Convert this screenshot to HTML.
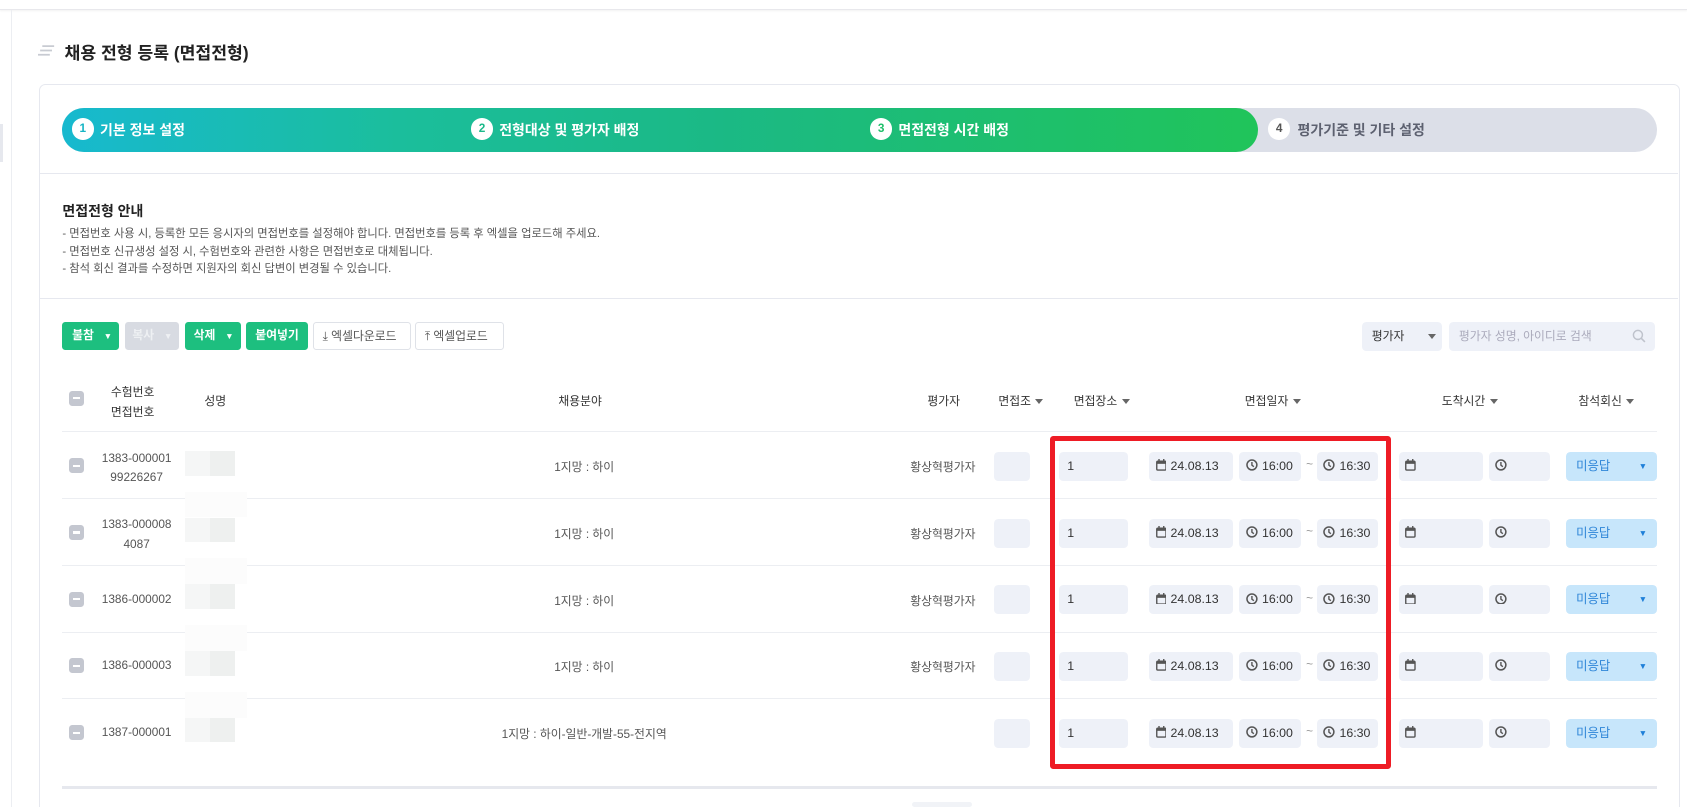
<!DOCTYPE html>
<html><head><meta charset="utf-8">
<style>
html,body{margin:0;padding:0;background:#fff;overflow:hidden;width:1687px;height:807px}
#w{position:absolute;left:0;top:0;width:1568px;height:750px;overflow:hidden;zoom:1.07589;font-family:"Liberation Sans","Noto Sans CJK KR",sans-serif;color:#222}
.a{position:absolute}
.t{position:absolute;white-space:nowrap}
.inp{position:absolute;background:#eef1f8;border-radius:4px;height:27px;font-size:11.5px;color:#333;line-height:27px}
.btn{position:absolute;top:299px;height:26px;border-radius:3px;font-size:11px;font-weight:bold;color:#fff;line-height:26px;box-sizing:border-box}
.g{background:#1dbf7f}
.o{background:#fff;border:1px solid #dfe2e8;color:#555;font-weight:normal}
.cb{position:absolute;width:14px;height:14px;border-radius:3px;background:#c4c7d0}
.cb:after{content:"";position:absolute;left:4px;top:6px;width:6px;height:2px;background:#fff}
.hd{position:absolute;font-size:11px;color:#333;white-space:nowrap}
.tri{display:inline-block;width:0;height:0;border-left:4px solid transparent;border-right:4px solid transparent;border-top:5px solid #666;margin-left:4px;vertical-align:middle}
.cell{position:absolute;font-size:11px;color:#555;white-space:nowrap}
.step{position:absolute;top:110px;width:20px;height:20px;border-radius:50%;background:#fff;font-size:11px;font-weight:bold;text-align:center;line-height:20px}
.sl{position:absolute;top:112px;font-size:13px;font-weight:bold;color:#fff;line-height:20px;white-space:nowrap}
</style></head><body><div id="w">
<div class="a" style="left:0;top:0;width:1568px;height:8px;background:#fff;border-bottom:1px solid #e8e8ec;box-shadow:0 1px 2px #eee"></div>
<div class="a" style="left:10px;top:9px;width:1px;height:741px;background:#eceef2"></div>
<div class="a" style="left:0;top:115px;width:3px;height:36px;background:#e6e8ee"></div>
<svg class="a" style="left:35px;top:41px" width="16" height="12"><path d="M4 2h11M2 6h11M0 10h11" stroke="#c8cbd2" stroke-width="1.6"/></svg>
<div class="t" style="left:60px;top:36px;font-size:16px;font-weight:bold;color:#222">채용 전형 등록 (면접전형)</div>
<div class="a" style="left:36px;top:78px;width:1524px;height:700px;border:1px solid #e6e8ef;border-radius:6px"></div>
<div class="a" style="left:58px;top:100px;width:1482px;height:41px;border-radius:21px;background:#dcdfe8"></div>
<div class="a" style="left:58px;top:100px;width:1111px;height:41px;border-radius:21px;background:linear-gradient(90deg,#17b9cf 0%,#1bbe9c 28%,#1bb985 55%,#20c45a 100%)"></div>
<div class="step" style="left:67px;color:#16b5c5">1</div><div class="sl" style="left:93px">기본 정보 설정</div>
<div class="step" style="left:438px;color:#1bb98a">2</div><div class="sl" style="left:464px">전형대상 및 평가자 배정</div>
<div class="step" style="left:809px;color:#1fbf6a">3</div><div class="sl" style="left:835px">면접전형 시간 배정</div>
<div class="step" style="left:1179px;color:#555">4</div><div class="sl" style="left:1206px;color:#5d6170">평가기준 및 기타 설정</div>
<div class="a" style="left:37px;top:161px;width:1523px;height:1px;background:#e6e8ef"></div>
<div class="t" style="left:58px;top:187px;font-size:13px;font-weight:bold">면접전형 안내</div>
<div class="t" style="left:58px;top:209px;font-size:10.5px;color:#555">- 면접번호 사용 시, 등록한 모든 응시자의 면접번호를 설정해야 합니다. 면접번호를 등록 후 엑셀을 업로드해 주세요.</div>
<div class="t" style="left:58px;top:226px;font-size:10.5px;color:#555">- 면접번호 신규생성 설정 시, 수험번호와 관련한 사항은 면접번호로 대체됩니다.</div>
<div class="t" style="left:58px;top:242px;font-size:10.5px;color:#555">- 참석 회신 결과를 수정하면 지원자의 회신 답변이 변경될 수 있습니다.</div>
<div class="a" style="left:37px;top:277px;width:1523px;height:1px;background:#e6e8ef"></div>
<div class="btn g" style="left:58px;width:53px;padding-left:9px">불참 <span style="margin-left:6px;font-size:8px">▼</span></div>
<div class="btn" style="left:116px;width:50px;padding-left:7px;background:#d8dbe2;color:#eef0f3">복사 <span style="margin-left:6px;font-size:8px">▼</span></div>
<div class="btn g" style="left:172px;width:52px;padding-left:8px">삭제 <span style="margin-left:6px;font-size:8px">▼</span></div>
<div class="btn g" style="left:229px;width:57px;text-align:center">붙여넣기</div>
<div class="btn o" style="left:291px;width:91px;padding-left:8px">⤓ 엑셀다운로드</div>
<div class="btn o" style="left:386px;width:82px;padding-left:8px">⤒ 엑셀업로드</div>
<div class="inp" style="left:1266px;top:299px;width:74px;font-size:11px;padding-left:9px;box-sizing:border-box">평가자<span class="tri" style="margin-left:22px"></span></div>
<div class="inp" style="left:1347px;top:299px;width:191px;font-size:11px;padding-left:9px;box-sizing:border-box;color:#aab">평가자 성명, 아이디로 검색
<svg style="position:absolute;right:8px;top:7px" width="13" height="13"><circle cx="5.5" cy="5.5" r="4.2" stroke="#bfc3cc" stroke-width="1.4" fill="none"/><path d="M8.5 8.5L12 12" stroke="#bfc3cc" stroke-width="1.5"/></svg></div>
<div class="cb" style="left:64px;top:363px"></div>
<div class="hd" style="left:103px;top:355px;text-align:center;line-height:19px">수험번호<br>면접번호</div>
<div class="hd" style="left:190px;top:364px">성명</div>
<div class="hd" style="left:519px;top:364px">채용분야</div>
<div class="hd" style="left:862px;top:364px">평가자</div>
<div class="hd" style="left:928px;top:364px">면접조<span class="tri"></span></div>
<div class="hd" style="left:998px;top:364px">면접장소<span class="tri"></span></div>
<div class="hd" style="left:1157px;top:364px">면접일자<span class="tri"></span></div>
<div class="hd" style="left:1340px;top:364px">도착시간<span class="tri"></span></div>
<div class="hd" style="left:1467px;top:364px">참석회신<span class="tri"></span></div>
<div class="a" style="left:58px;top:401px;width:1482px;height:1px;background:#eceef2"></div>
<div id="rows"></div>
<div class="a" style="left:58px;top:731px;width:1482px;height:2px;background:#e6e8ee"></div>
<div class="a" style="left:848px;top:745px;width:55px;height:5px;background:#f1f3f7;border-radius:3px"></div>
<div class="a" style="left:976px;top:405px;width:308px;height:300px;border:5px solid #ee1c25;border-radius:3px"></div>
<script>
var data=[["1383-000001","99226267","1지망 : 하이","황상혁평가자"],["1383-000008","4087","1지망 : 하이","황상혁평가자"],["1386-000002","","1지망 : 하이","황상혁평가자"],["1386-000003","","1지망 : 하이","황상혁평가자"],["1387-000001","","1지망 : 하이-일반-개발-55-전지역",""]];
var cal='<svg width="10" height="11" style="vertical-align:-1px;margin-right:4px"><rect x="0.7" y="2" width="8.6" height="8.3" rx="1" fill="none" stroke="#555" stroke-width="1.3"/><rect x="0.7" y="2" width="8.6" height="2.5" fill="#555"/><path d="M2.8 0v3M7.2 0v3" stroke="#555" stroke-width="1.3"/></svg>';
var clk='<svg width="11" height="11" style="vertical-align:-1px;margin-right:4px"><circle cx="5.5" cy="5.5" r="4.6" fill="none" stroke="#555" stroke-width="1.4"/><path d="M5.5 2.8v2.9l1.8 1.4" stroke="#555" stroke-width="1.3" fill="none"/></svg>';
var h='';
data.forEach(function(d,i){
 var c=433+i*62, top=c-13;
 h+='<div class="cb" style="left:64px;top:'+(c-7)+'px"></div>';
 if(d[1]) h+='<div class="cell" style="left:87px;width:80px;text-align:center;top:'+(c-16)+'px;line-height:18px">'+d[0]+'<br>'+d[1]+'</div>';
 else h+='<div class="cell" style="left:87px;width:80px;text-align:center;top:'+(c-7)+'px">'+d[0]+'</div>';
 if(i>0) h+='<div class="a" style="left:172px;top:'+(c-38)+'px;width:58px;height:24px;background:#fcfcfc"></div>';
 h+='<div class="a" style="left:172px;top:'+(c-14)+'px;width:23px;height:23px;background:#f5f6f6"></div><div class="a" style="left:195px;top:'+(c-14)+'px;width:23px;height:23px;background:#eef0ef"></div>';
 h+='<div class="cell" style="left:343px;width:400px;text-align:center;top:'+(c-7)+'px">'+d[2]+'</div>';
 h+='<div class="cell" style="left:846px;top:'+(c-7)+'px">'+d[3]+'</div>';
 h+='<div class="inp" style="left:924px;top:'+top+'px;width:33px"></div>';
 h+='<div class="inp" style="left:984px;top:'+top+'px;width:64px;padding-left:8px;box-sizing:border-box">1</div>';
 h+='<div class="inp" style="left:1068px;top:'+top+'px;width:78px;padding-left:6px;box-sizing:border-box">'+cal+'24.08.13</div>';
 h+='<div class="inp" style="left:1152px;top:'+top+'px;width:57px;padding-left:6px;box-sizing:border-box">'+clk+'16:00</div>';
 h+='<div class="cell" style="left:1214px;top:'+(c-8)+'px;color:#999">~</div>';
 h+='<div class="inp" style="left:1224px;top:'+top+'px;width:57px;padding-left:6px;box-sizing:border-box">'+clk+'16:30</div>';
 h+='<div class="inp" style="left:1300px;top:'+top+'px;width:78px;padding-left:6px;box-sizing:border-box">'+cal+'</div>';
 h+='<div class="inp" style="left:1384px;top:'+top+'px;width:57px;padding-left:6px;box-sizing:border-box">'+clk+'</div>';
 h+='<div class="inp" style="left:1456px;top:'+top+'px;width:84px;background:#c7e6fb;color:#2f86d8;padding-left:9px;box-sizing:border-box">미응답<span style="position:absolute;right:9px;font-size:8px;color:#1e7fd8">▼</span></div>';
 if(i<4) h+='<div class="a" style="left:58px;top:'+(c+30)+'px;width:1482px;height:1px;background:#eceef2"></div>';
});
document.getElementById('rows').outerHTML=h;
</script>
</div></body></html>
